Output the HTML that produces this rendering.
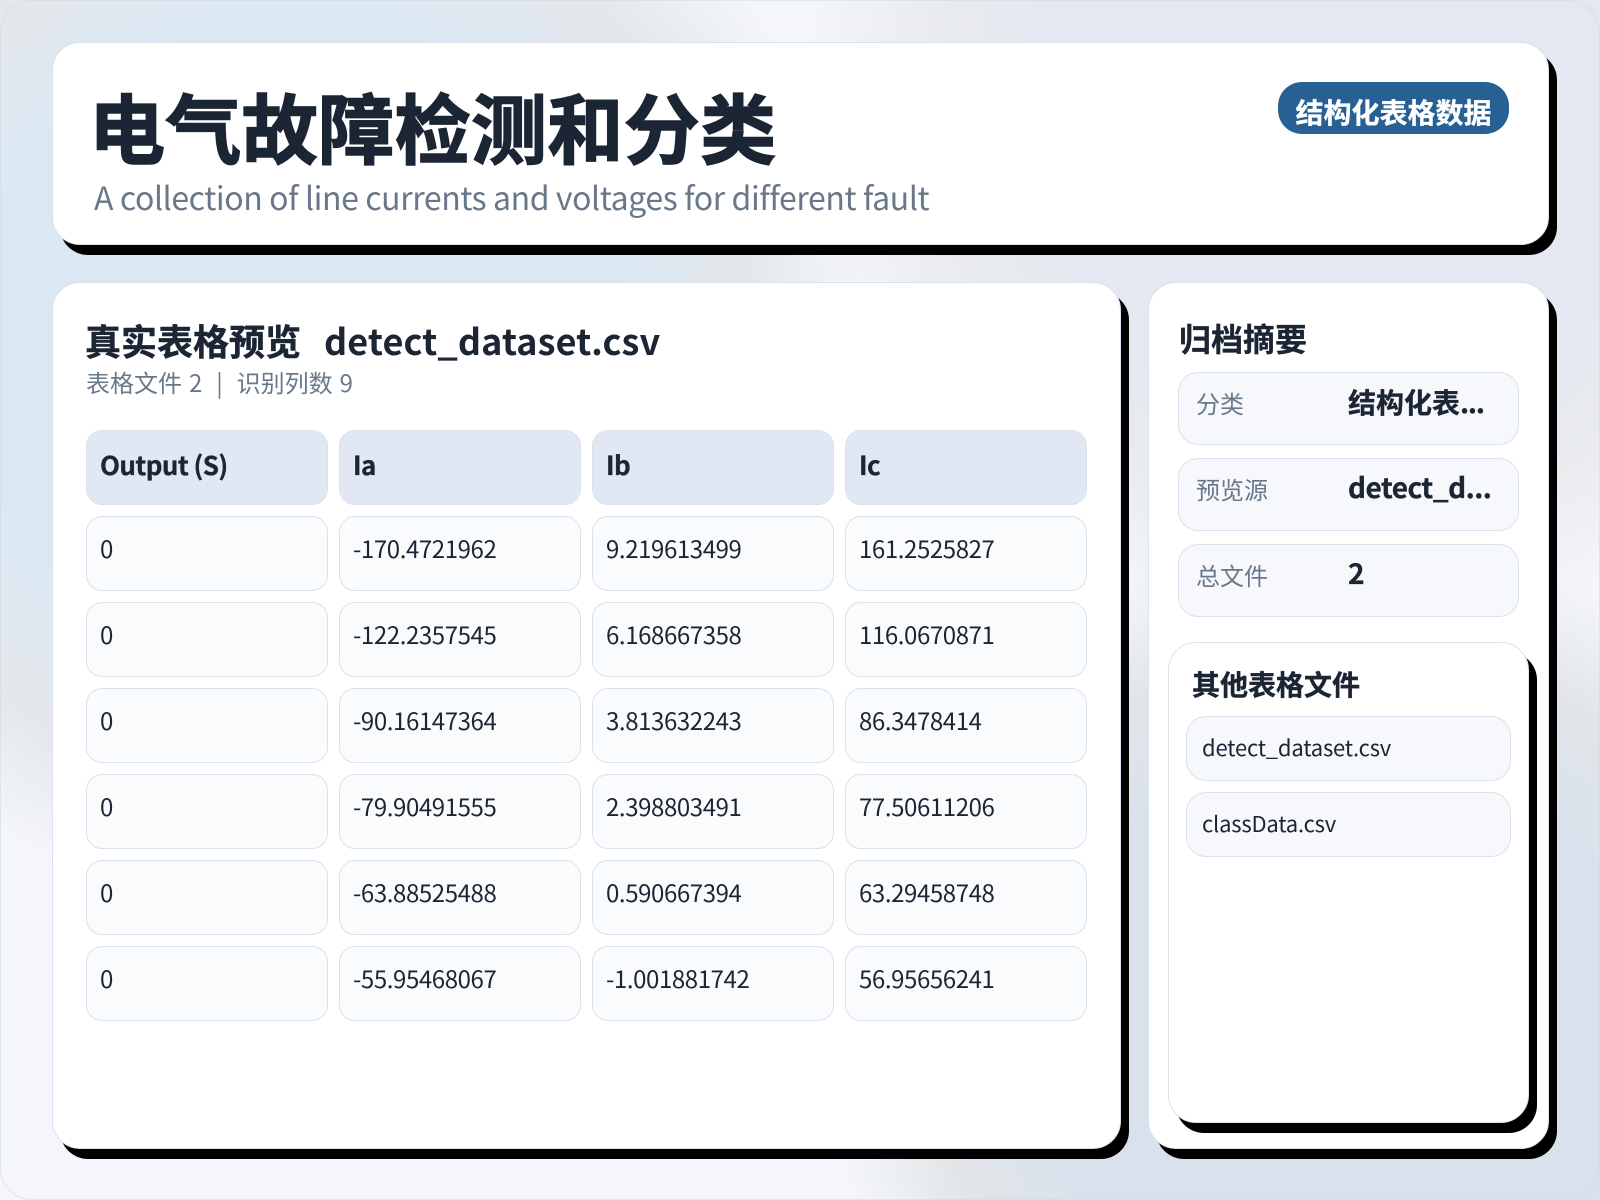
<!DOCTYPE html>
<html lang="zh">
<head>
<meta charset="utf-8">
<title>电气故障检测和分类</title>
<style>
*{box-sizing:border-box;margin:0;padding:0}
html,body{width:1600px;height:1200px;overflow:hidden}
body{font-family:"Noto Sans CJK SC","Liberation Sans",sans-serif;color:#1b2533;position:relative;
background:
radial-gradient(circle at 1350px 1050px,#d9e2ec 0,#d9e2ec 310px,#e2e5e8 410px,rgba(226,229,232,0) 520px),
radial-gradient(circle at 1350px 100px,#e3e8f1 0,#e3e8f1 300px,#e9ebee 420px,rgba(233,235,238,0) 550px),
radial-gradient(circle at 300px 350px,#dbe8f4 0,#dbe8f4 330px,#e4e7ea 450px,rgba(228,231,234,0) 570px),
#f4f6fb}
.bg{position:absolute;left:0;top:0;width:1600px;height:1200px;border:1px solid rgba(205,215,228,.5);border-radius:32px}
.a{position:absolute;white-space:nowrap}
.card{position:absolute;background:#fff;border:1px solid #d9e2ec;border-radius:28px;box-shadow:8px 10px 0 #000}
.cell{position:absolute;width:242px;height:75px;border:1px solid #d9e2ec;border-radius:16px;background:#fafbfd;font-size:24px;line-height:32px;padding:15px 13px 0;white-space:nowrap;color:#1b2533;letter-spacing:-.4px}
.cell.h{background:#e1e8f3;font-weight:bold;font-size:26px;line-height:34px;padding-top:17px;letter-spacing:-.6px;-webkit-text-stroke:.3px #1b2533}
.row{position:absolute;left:1178px;width:341px;height:73px;border:1px solid #d9e2ec;border-radius:20px;background:#f6f8fc}
.lab{position:absolute;left:1196px;font-size:24px;line-height:32px;color:#697889;white-space:nowrap}
.val{position:absolute;left:1348px;font-size:28px;line-height:40px;font-weight:bold;color:#1b2533;white-space:nowrap;-webkit-text-stroke:.3px #1b2533}
.file{position:absolute;left:1186px;width:325px;height:65px;border:1px solid #d9e2ec;border-radius:20px;background:#f6f8fc;font-size:22px;line-height:32px;padding:14px 15px 0;color:#1b2533;white-space:nowrap;letter-spacing:-.2px}
</style>
</head>
<body>
<div class="bg"></div>

<div class="card" style="left:52px;top:42px;width:1497px;height:203px"></div>
<div class="a" style="left:89px;top:77px;font-size:76px;line-height:96px;font-weight:bold;letter-spacing:.4px;color:#1b2533;-webkit-text-stroke:1.5px #1b2533">电气故障检测和分类</div>
<div class="a" style="left:94px;top:176px;font-size:32px;line-height:42px;letter-spacing:-.4px;color:#697889">A collection of line currents and voltages for different fault</div>
<div class="a" style="left:1278px;top:82px;width:231px;height:52px;border-radius:24px;background:#276092;color:#fff;font-size:28px;line-height:60px;font-weight:bold;text-align:center;-webkit-text-stroke:.3px #fff">结构化表格数据</div>

<div class="card" style="left:52px;top:282px;width:1069px;height:867px"></div>
<div class="a" style="left:85px;top:316px;font-size:36px;line-height:48px;font-weight:bold;color:#1b2533;-webkit-text-stroke:.5px #1b2533">真实表格预览</div>
<div class="a" style="left:324px;top:316px;font-size:36px;line-height:48px;font-weight:bold;letter-spacing:.1px;color:#1b2533">detect_dataset.csv</div>
<div class="a" style="left:86px;top:366px;font-size:24px;line-height:32px;word-spacing:1.6px;color:#697889">表格文件 2 &nbsp;|&nbsp; 识别列数 9</div>

<div class="cell h" style="left:86px;top:430px">Output (S)</div>
<div class="cell h" style="left:339px;top:430px">Ia</div>
<div class="cell h" style="left:592px;top:430px">Ib</div>
<div class="cell h" style="left:845px;top:430px">Ic</div>

<div class="cell" style="left:86px;top:516px">0</div>
<div class="cell" style="left:339px;top:516px">-170.4721962</div>
<div class="cell" style="left:592px;top:516px">9.219613499</div>
<div class="cell" style="left:845px;top:516px">161.2525827</div>

<div class="cell" style="left:86px;top:602px">0</div>
<div class="cell" style="left:339px;top:602px">-122.2357545</div>
<div class="cell" style="left:592px;top:602px">6.168667358</div>
<div class="cell" style="left:845px;top:602px">116.0670871</div>

<div class="cell" style="left:86px;top:688px">0</div>
<div class="cell" style="left:339px;top:688px">-90.16147364</div>
<div class="cell" style="left:592px;top:688px">3.813632243</div>
<div class="cell" style="left:845px;top:688px">86.3478414</div>

<div class="cell" style="left:86px;top:774px">0</div>
<div class="cell" style="left:339px;top:774px">-79.90491555</div>
<div class="cell" style="left:592px;top:774px">2.398803491</div>
<div class="cell" style="left:845px;top:774px">77.50611206</div>

<div class="cell" style="left:86px;top:860px">0</div>
<div class="cell" style="left:339px;top:860px">-63.88525488</div>
<div class="cell" style="left:592px;top:860px">0.590667394</div>
<div class="cell" style="left:845px;top:860px">63.29458748</div>

<div class="cell" style="left:86px;top:946px">0</div>
<div class="cell" style="left:339px;top:946px">-55.95468067</div>
<div class="cell" style="left:592px;top:946px">-1.001881742</div>
<div class="cell" style="left:845px;top:946px">56.95656241</div>

<div class="card" style="left:1148px;top:282px;width:401px;height:867px"></div>
<div class="a" style="left:1179px;top:317px;font-size:32px;line-height:42px;font-weight:bold;color:#1b2533;-webkit-text-stroke:.3px #1b2533">归档摘要</div>

<div class="row" style="top:372px"></div>
<div class="lab" style="top:387px">分类</div>
<div class="val" style="top:382px">结构化表<span style="letter-spacing:-1.2px">...</span></div>
<div class="row" style="top:458px"></div>
<div class="lab" style="top:473px">预览源</div>
<div class="val" style="top:467px;letter-spacing:-.5px">detect_d...</div>
<div class="row" style="top:544px"></div>
<div class="lab" style="top:559px">总文件</div>
<div class="val" style="top:553px">2</div>

<div class="card" style="left:1168px;top:642px;width:361px;height:481px"></div>
<div class="a" style="left:1192px;top:665px;font-size:28px;line-height:38px;font-weight:bold;color:#1b2533;-webkit-text-stroke:.4px #1b2533">其他表格文件</div>
<div class="file" style="top:716px">detect_dataset.csv</div>
<div class="file" style="top:792px">classData.csv</div>
</body>
</html>
